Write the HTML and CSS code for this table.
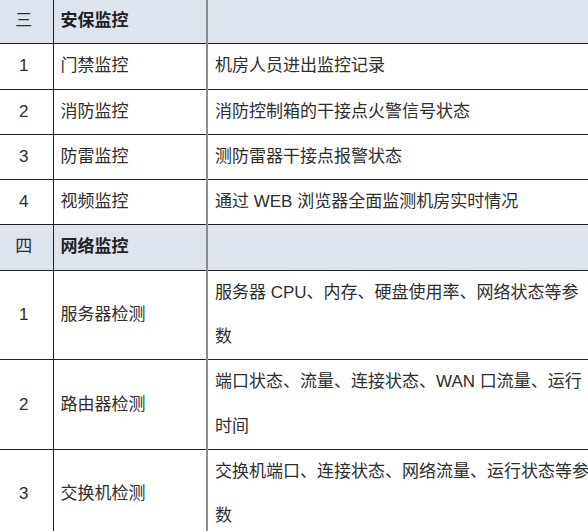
FILE: index.html
```html
<!DOCTYPE html>
<html lang="zh">
<head>
<meta charset="utf-8">
<link rel="stylesheet" href="styles.css">
</head>
<body>
<table class="spec">
  <colgroup>
    <col class="c-no">
    <col class="c-name">
    <col class="c-desc">
  </colgroup>
  <tr class="section">
    <td class="no">三</td>
    <td class="name">安保监控</td>
    <td class="desc"></td>
  </tr>
  <tr>
    <td class="no">1</td>
    <td class="name">门禁监控</td>
    <td class="desc">机房人员进出监控记录</td>
  </tr>
  <tr>
    <td class="no">2</td>
    <td class="name">消防监控</td>
    <td class="desc">消防控制箱的干接点火警信号状态</td>
  </tr>
  <tr>
    <td class="no">3</td>
    <td class="name">防雷监控</td>
    <td class="desc">测防雷器干接点报警状态</td>
  </tr>
  <tr>
    <td class="no">4</td>
    <td class="name">视频监控</td>
    <td class="desc">通过 WEB 浏览器全面监测机房实时情况</td>
  </tr>
  <tr class="section">
    <td class="no">四</td>
    <td class="name">网络监控</td>
    <td class="desc"></td>
  </tr>
  <tr>
    <td class="no">1</td>
    <td class="name">服务器检测</td>
    <td class="desc">服务器 CPU、内存、硬盘使用率、网络状态等参数</td>
  </tr>
  <tr>
    <td class="no">2</td>
    <td class="name">路由器检测</td>
    <td class="desc">端口状态、流量、连接状态、WAN 口流量、运行时间</td>
  </tr>
  <tr>
    <td class="no">3</td>
    <td class="name">交换机检测</td>
    <td class="desc">交换机端口、连接状态、网络流量、运行状态等参数</td>
  </tr>
</table>
</body>
</html>
```

FILE: styles.css
```css
html, body {
  margin: 0;
  padding: 0;
  background: #ffffff;
  overflow: hidden;
}

body {
  width: 588px;
  height: 531px;
  font-family: "Liberation Sans", "Noto Sans CJK SC", sans-serif;
  font-size: 17px;
  color: #2e2e2e;
}

.spec {
  border-collapse: collapse;
  table-layout: fixed;
  width: 600px;
  margin-top: -2px;
}

.c-no { width: 53px; }
.c-name { width: 154px; }
.c-desc { width: 393px; }

.spec td {
  border: 1px solid #222222;
  padding: 0 6px 0 7px;
  line-height: 44.3px;
  vertical-align: middle;
  word-break: break-all;
}

.spec td.no {
  text-align: center;
  padding: 0 5px 0 0;
  border-left: none;
}

.spec td.name {
  border-right: 2px solid #8c8c8c;
}

.spec td.desc {
  border-left: 2px solid #8c8c8c;
}

.section td {
  background: #dde4ee;
}

.section td.name {
  font-weight: bold;
  color: #222222;
}
```
